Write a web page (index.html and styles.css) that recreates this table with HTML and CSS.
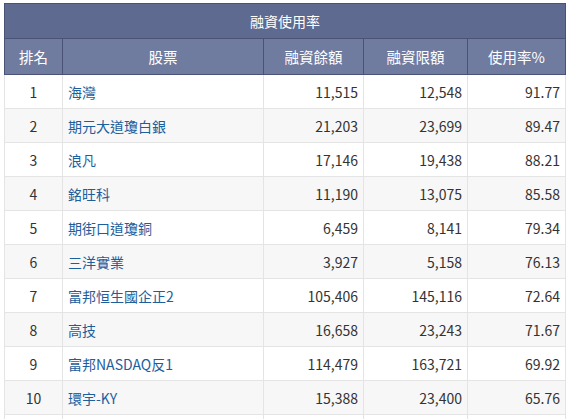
FILE: index.html
```html
<!DOCTYPE html>
<html lang="zh-Hant">
<head>
<meta charset="utf-8">
<link rel="stylesheet" href="styles.css">
</head>
<body>
<div class="wrap">
<table class="grid">
  <colgroup>
    <col class="c-rank"><col class="c-name"><col class="c-bal"><col class="c-lim"><col class="c-pct">
  </colgroup>
  <thead>
    <tr class="title"><th colspan="5">融資使用率</th></tr>
    <tr class="head"><th>排名</th><th>股票</th><th>融資餘額</th><th>融資限額</th><th>使用率%</th></tr>
  </thead>
  <tbody>
    <tr><td class="rank">1</td><td class="name"><a>海灣</a></td><td class="num">11,515</td><td class="num">12,548</td><td class="num">91.77</td></tr>
    <tr><td class="rank">2</td><td class="name"><a>期元大道瓊白銀</a></td><td class="num">21,203</td><td class="num">23,699</td><td class="num">89.47</td></tr>
    <tr><td class="rank">3</td><td class="name"><a>浪凡</a></td><td class="num">17,146</td><td class="num">19,438</td><td class="num">88.21</td></tr>
    <tr><td class="rank">4</td><td class="name"><a>銘旺科</a></td><td class="num">11,190</td><td class="num">13,075</td><td class="num">85.58</td></tr>
    <tr><td class="rank">5</td><td class="name"><a>期街口道瓊銅</a></td><td class="num">6,459</td><td class="num">8,141</td><td class="num">79.34</td></tr>
    <tr><td class="rank">6</td><td class="name"><a>三洋實業</a></td><td class="num">3,927</td><td class="num">5,158</td><td class="num">76.13</td></tr>
    <tr><td class="rank">7</td><td class="name"><a>富邦恒生國企正2</a></td><td class="num">105,406</td><td class="num">145,116</td><td class="num">72.64</td></tr>
    <tr><td class="rank">8</td><td class="name"><a>高技</a></td><td class="num">16,658</td><td class="num">23,243</td><td class="num">71.67</td></tr>
    <tr><td class="rank">9</td><td class="name"><a>富邦NASDAQ反1</a></td><td class="num">114,479</td><td class="num">163,721</td><td class="num">69.92</td></tr>
    <tr><td class="rank">10</td><td class="name"><a>環宇-KY</a></td><td class="num">15,388</td><td class="num">23,400</td><td class="num">65.76</td></tr>
    <tr class="more"><td></td><td></td><td></td><td></td><td></td></tr>
  </tbody>
</table>
</div>
</body>
</html>
```
FILE: styles.css
```css
html, body {
  margin: 0;
  padding: 0;
  background: #ffffff;
}
.wrap {
  padding: 3px 4px 0 4px;
}
.grid {
  border-collapse: collapse;
  width: 561px;
  table-layout: fixed;
  font-family: "Noto Sans CJK TC", "Liberation Sans", sans-serif;
  font-size: 14px;
  color: #333333;
}
.c-rank { width: 58px; }
.c-name { width: 201px; }
.c-bal { width: 100px; }
.c-lim { width: 104px; }
.c-pct { width: 98px; }

.title th {
  background: #5e6a8f;
  color: #ffffff;
  font-weight: normal;
  height: 34px;
  padding: 0;
  border: 1px solid #4a5376;
  text-align: center;
}
.head th {
  background: #707ba0;
  color: #ffffff;
  font-weight: normal;
  height: 35px;
  padding: 0;
  border: 1px solid #4a5376;
  text-align: center;
  font-size: 14.5px;
}
tbody td {
  height: 33px;
  padding: 0 5px;
  border: 1px solid #e4e4e4;
  white-space: nowrap;
  overflow: hidden;
}
tbody tr:nth-child(even) td {
  background: #f7f7f7;
}
.rank { text-align: center; }
.name { text-align: left; }
.name a {
  color: #1d5e9c;
  text-decoration: none;
}
.num { text-align: right; }
```
